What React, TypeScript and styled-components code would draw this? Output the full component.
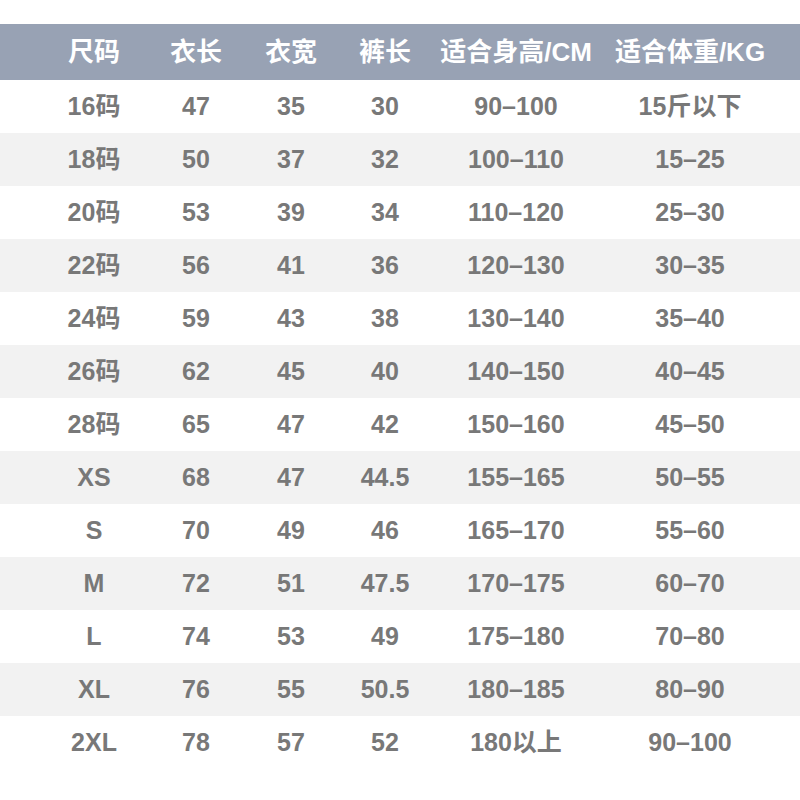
import React from "react";
import styled, { createGlobalStyle } from "styled-components";

const Global = createGlobalStyle`
  html, body { margin: 0; padding: 0; background: #ffffff; }
  body { font-family: "Liberation Sans", "Noto Sans CJK SC", sans-serif; }
`;

const Page = styled.div`
  width: 800px;
  height: 800px;
  padding-top: 24px;
  box-sizing: border-box;
  background: #ffffff;
`;

const Table = styled.div`
  display: flex;
  flex-direction: column;
`;

const Row = styled.div<{ $variant: "head" | "odd" | "even" }>`
  display: grid;
  grid-template-columns: 108px 96px 94px 94px 168px 180px;
  padding-left: 40px;
  align-items: center;
  height: ${(p) => (p.$variant === "head" ? "56px" : "53px")};
  background: ${(p) =>
    p.$variant === "head" ? "#98a2b4" : p.$variant === "even" ? "#f2f2f2" : "#ffffff"};
  color: ${(p) => (p.$variant === "head" ? "#ffffff" : "#787878")};
`;

const Cell = styled.div<{ $head?: boolean }>`
  text-align: center;
  font-weight: 700;
  font-size: ${(p) => (p.$head ? "26px" : "25px")};
  line-height: 1;
  white-space: nowrap;
  font-family: "Liberation Sans", "Noto Sans CJK SC", sans-serif;
`;

const headers = ["尺码", "衣长", "衣宽", "裤长", "适合身高/CM", "适合体重/KG"];

const rows: string[][] = [
  ["16码", "47", "35", "30", "90–100", "15斤以下"],
  ["18码", "50", "37", "32", "100–110", "15–25"],
  ["20码", "53", "39", "34", "110–120", "25–30"],
  ["22码", "56", "41", "36", "120–130", "30–35"],
  ["24码", "59", "43", "38", "130–140", "35–40"],
  ["26码", "62", "45", "40", "140–150", "40–45"],
  ["28码", "65", "47", "42", "150–160", "45–50"],
  ["XS", "68", "47", "44.5", "155–165", "50–55"],
  ["S", "70", "49", "46", "165–170", "55–60"],
  ["M", "72", "51", "47.5", "170–175", "60–70"],
  ["L", "74", "53", "49", "175–180", "70–80"],
  ["XL", "76", "55", "50.5", "180–185", "80–90"],
  ["2XL", "78", "57", "52", "180以上", "90–100"],
];

export default function App() {
  return (
    <Page>
      <Global />
      <Table>
        <Row $variant="head">
          {headers.map((h) => (
            <Cell $head key={h}>
              {h}
            </Cell>
          ))}
        </Row>
        {rows.map((r, i) => (
          <Row key={r[0]} $variant={i % 2 === 1 ? "even" : "odd"}>
            {r.map((c, j) => (
              <Cell key={j}>{c}</Cell>
            ))}
          </Row>
        ))}
      </Table>
    </Page>
  );
}
